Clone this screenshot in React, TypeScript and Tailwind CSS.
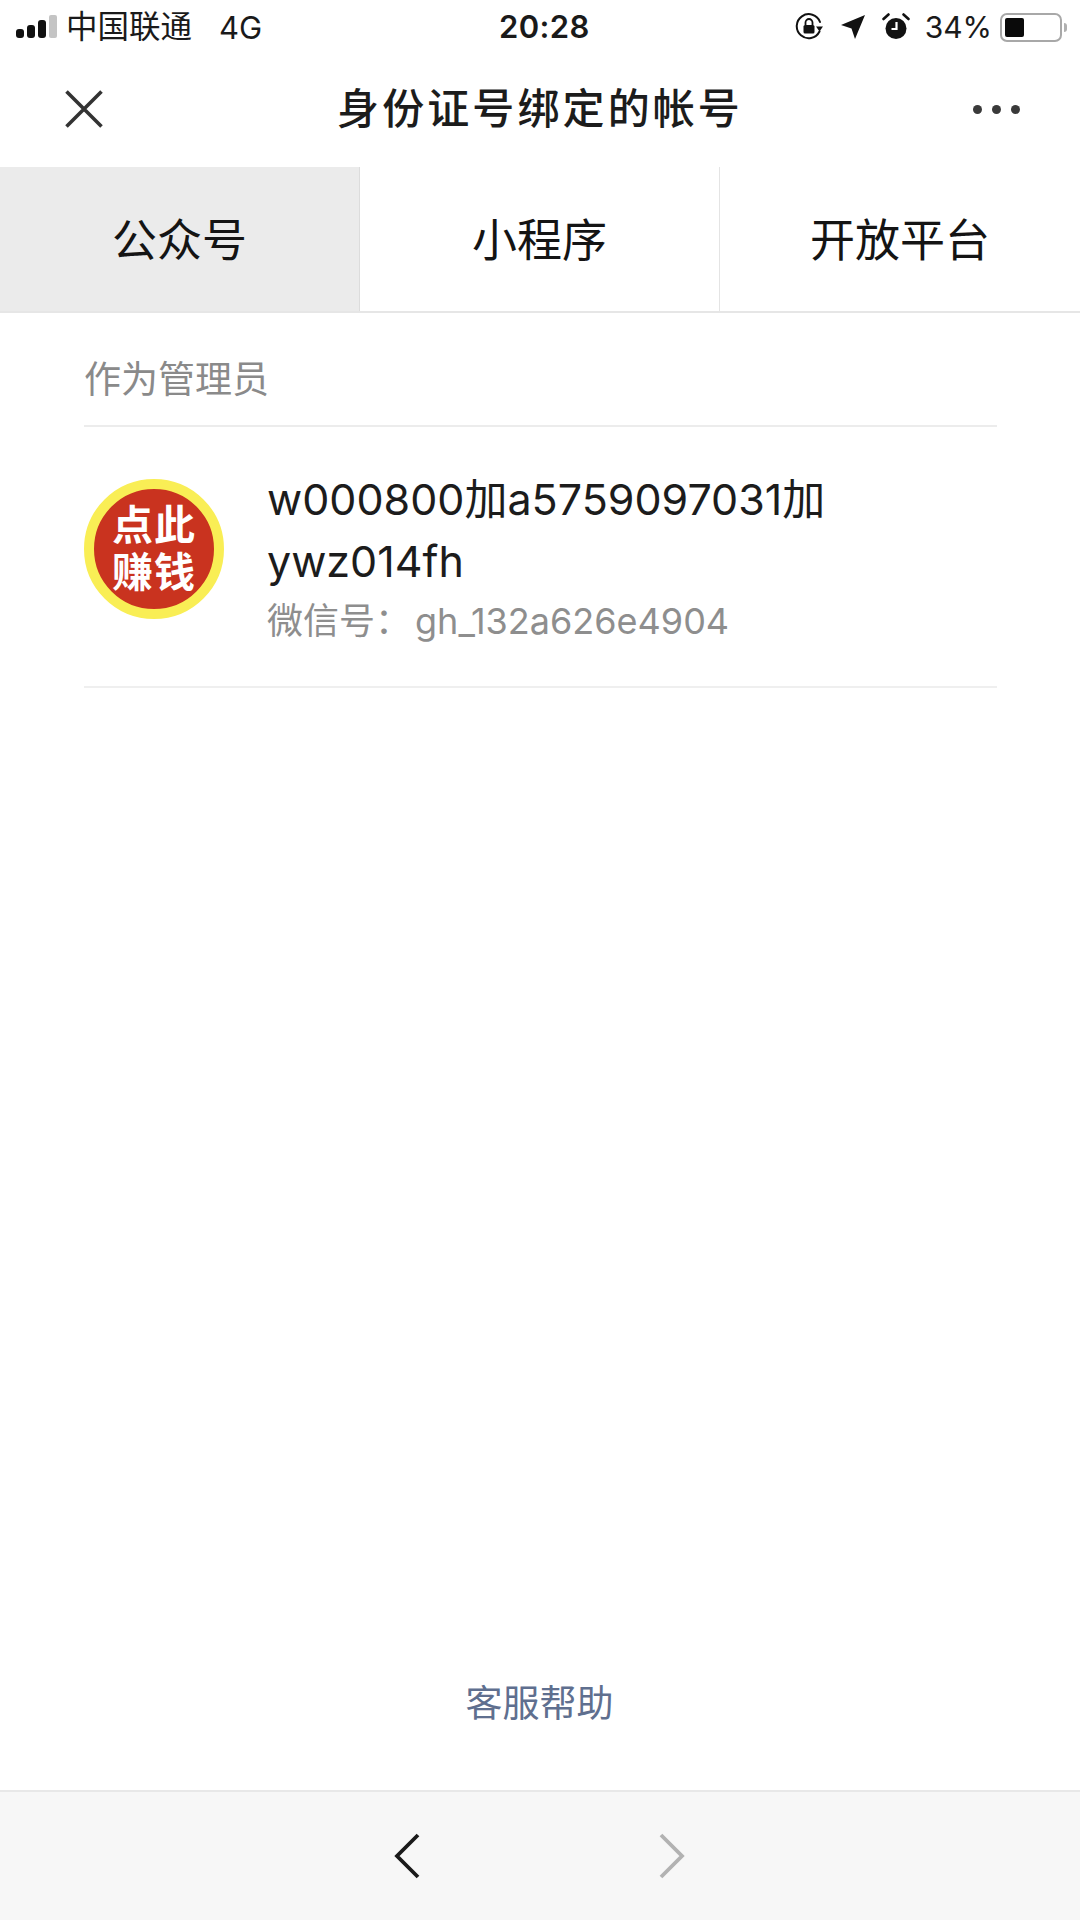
const cjk = "font-['Inter','Noto_Sans_CJK_SC',sans-serif]";

function SignalBars() {
  return (
    <svg width="42" height="24" viewBox="0 0 42 24" className="shrink-0">
      <rect x="0" y="14" width="8" height="9" rx="3" fill="#111" />
      <rect x="11" y="10" width="8" height="13" rx="3" fill="#111" />
      <rect x="22" y="5" width="8" height="18" rx="3" fill="#111" />
      <rect x="33" y="0" width="8" height="23" rx="2" fill="#c4c4c4" />
    </svg>
  );
}

function OrientationLock() {
  return (
    <svg width="30" height="30" viewBox="0 0 30 30" fill="none" className="shrink-0">
      <path d="M25.5 19.5A12 12 0 1 1 26 10" stroke="#111" strokeWidth="2" strokeLinecap="round" />
      <path d="M22 14.5h7l-3.5 5z" fill="#111" />
      <rect x="9.5" y="13" width="11" height="8.5" rx="1.5" fill="#111" />
      <path d="M11.5 13v-2.5a3.5 3.5 0 0 1 7 0V13" stroke="#111" strokeWidth="1.8" />
    </svg>
  );
}

function LocationArrow() {
  return (
    <svg width="26" height="26" viewBox="0 0 26 26" className="shrink-0">
      <path d="M25 1 L15 25 L11.5 14.5 L1 11 Z" fill="#111" />
    </svg>
  );
}

function Alarm() {
  return (
    <svg width="28" height="28" viewBox="0 0 28 28" className="shrink-0">
      <circle cx="14" cy="15.5" r="10.5" fill="#111" />
      <path d="M14.5 9v7H9.5" stroke="#fff" strokeWidth="2.2" fill="none" />
      <path d="M1.5 6 L6.5 1.5 M26.5 6 L21.5 1.5" stroke="#111" strokeWidth="2.6" strokeLinecap="round" />
    </svg>
  );
}

function Battery() {
  return (
    <div className="flex items-center gap-[2px] shrink-0">
      <div className="w-[62px] h-[29px] rounded-[7px] border-2 border-[#a8a8a8] p-[3px]">
        <div className="w-[19px] h-full rounded-[2px] bg-[#0a0a0a]" />
      </div>
      <div className="w-[3px] h-[9px] rounded-r-full bg-[#b0b0b0]" />
    </div>
  );
}

function StatusBar() {
  return (
    <div className="relative flex items-center justify-between h-[54px] pl-[16px] pr-[13px] text-[#1a1a1a]">
      <div className="flex items-center">
        <SignalBars />
        <span className="ml-[8px] text-[31.5px] leading-none">中国联通</span>
        <span className="ml-[27px] text-[31px] leading-none">4G</span>
      </div>
      <span className="absolute left-[499px] top-[11px] text-[31px] leading-[32px] font-semibold tracking-[0.4px]">20:28</span>
      <div className="flex items-center">
        <OrientationLock />
        <span className="ml-[16px]"><LocationArrow /></span>
        <span className="ml-[16px]"><Alarm /></span>
        <span className="ml-[15px] text-[30px] leading-none">34%</span>
        <span className="ml-[8px]"><Battery /></span>
      </div>
    </div>
  );
}

function NavBar() {
  return (
    <div className="flex items-center justify-between h-[113px] pb-[3px] pl-[65px] pr-[60px]">
      <svg width="38" height="38" viewBox="0 0 38 38" className="shrink-0">
        <path d="M1.5 1.5 L36.5 36.5 M36.5 1.5 L1.5 36.5" stroke="#333" strokeWidth="3.6" />
      </svg>
      <h1 className="ml-[4px] text-[42px] leading-none font-medium text-[#1c1c1c] tracking-[3.1px]">身份证号绑定的帐号</h1>
      <div className="flex gap-[10px]">
        <div className="w-[9px] h-[9px] rounded-full bg-[#3a3a3a]" />
        <div className="w-[9px] h-[9px] rounded-full bg-[#3a3a3a]" />
        <div className="w-[9px] h-[9px] rounded-full bg-[#3a3a3a]" />
      </div>
    </div>
  );
}

function Tabs() {
  return (
    <div className="grid grid-cols-3 h-[146px] border-b-2 border-[#e6e6e6] text-[45px] text-[#141414]">
      <div className="flex items-center justify-center pt-[3px] bg-[#ebebeb] border-r border-[#dcdcdc]">公众号</div>
      <div className="flex items-center justify-center pt-[3px] border-r border-[#e4e4e4]">小程序</div>
      <div className="flex items-center justify-center pt-[3px]">开放平台</div>
    </div>
  );
}

function Avatar() {
  return (
    <div className="flex items-center justify-center w-[140px] h-[140px] shrink-0 rounded-full bg-[#c9331f] border-[10px] border-[#f9ee55]">
      <div className="text-[41px] leading-[47px] font-bold text-white text-center tracking-[1px] whitespace-nowrap">
        <div>点此</div>
        <div>赚钱</div>
      </div>
    </div>
  );
}

export default function App() {
  return (
    <div className={`${cjk} flex flex-col w-[1080px] h-[1920px] bg-white overflow-hidden`}>
      <StatusBar />
      <NavBar />
      <Tabs />
      <div className="flex flex-col flex-1 ml-[84px] mr-[83px]">
        <div className="flex items-center h-[114px] pt-[20px] border-b-2 border-[#ececec] text-[37px] leading-none text-[#8a8a8a]">作为管理员</div>
        <div className="flex gap-[43px] h-[261px] pt-[52px] border-b-2 border-[#efefef]">
          <Avatar />
          <div className="min-w-0 -mt-[11px]">
            <div className="text-[43px] leading-[62px] text-[#1c1c1c] w-[600px]">w000800加a5759097031加 ywz014fh</div>
            <div className="mt-[4px] text-[36px] leading-[50px] text-[#8e8e8e] whitespace-nowrap">
              微信号：<span className="ml-[4px]">gh_132a626e4904</span>
            </div>
          </div>
        </div>
        <div className="mt-auto mb-[61px] text-center text-[37px] leading-[50px] text-[#5f6f8f] pr-[2px]">客服帮助</div>
      </div>
      <div className="flex items-center justify-center gap-[239px] h-[130px] bg-[#f7f7f7] border-t-2 border-[#e8e8e8] pr-[2px]">
        <svg width="26" height="46" viewBox="0 0 26 46">
          <path d="M24 2 L3 23 L24 44" fill="none" stroke="#1a1a1a" strokeWidth="3.8" />
        </svg>
        <svg width="26" height="46" viewBox="0 0 26 46">
          <path d="M2 2 L23 23 L2 44" fill="none" stroke="#b2b2b2" strokeWidth="3.8" />
        </svg>
      </div>
    </div>
  );
}
